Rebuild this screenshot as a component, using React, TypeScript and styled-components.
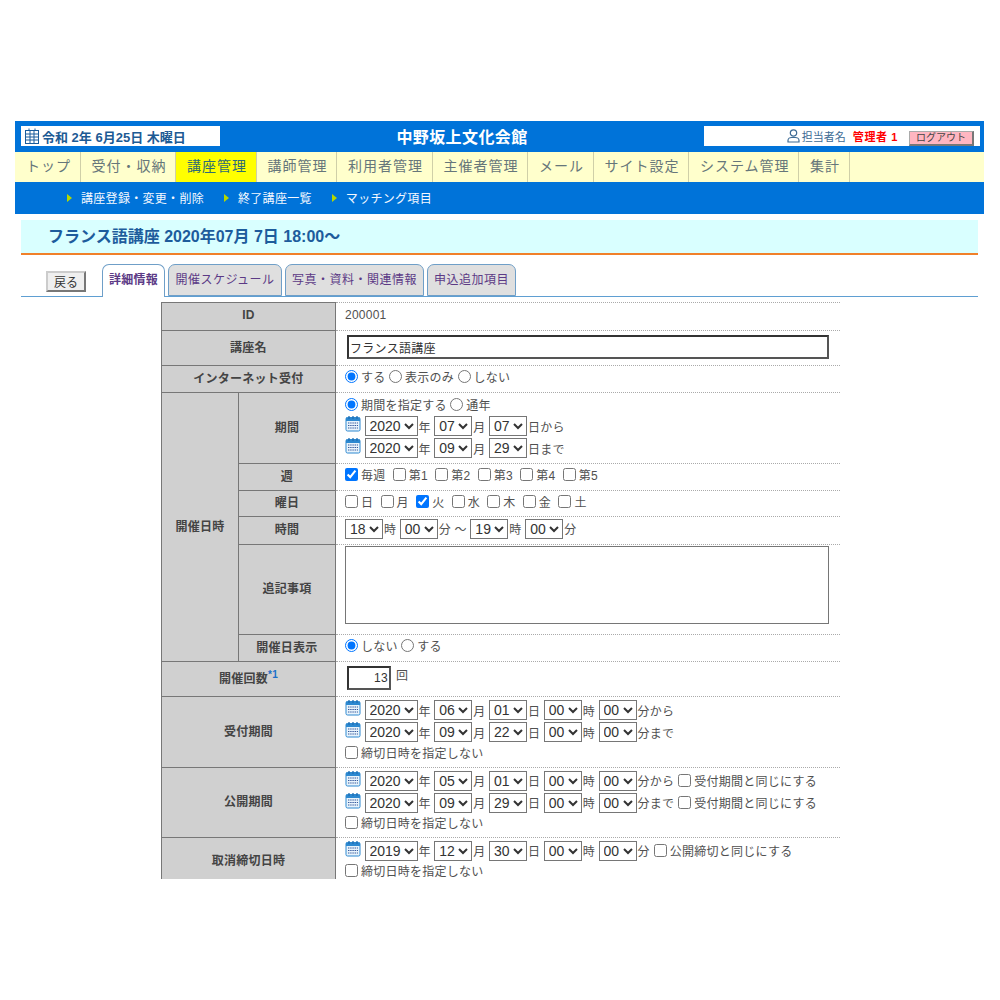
import React from "react";
import styled, { createGlobalStyle } from "styled-components";

const Global = createGlobalStyle`
  html, body { margin: 0; padding: 0; background: #fff; }
  body { font-family: "Liberation Sans", "Noto Sans CJK JP", sans-serif; font-size: 12px; color: #444; }
`;

const Page = styled.div`
  margin: 121px 16px 0 15px;
  height: 758px;
  overflow: hidden;
`;
const Header = styled.header`
  height: 31px;
  background: #0073d9;
  display: flex;
  align-items: flex-start;
  padding: 5px 4px 0 6px;
  box-sizing: border-box;
`;
const DateBox = styled.div`
  width: 199px;
  height: 20px;
  background: #fff;
  display: flex;
  align-items: center;
  gap: 3px;
  padding-left: 4px;
  box-sizing: border-box;
  font-size: 13px;
  font-weight: bold;
  color: #1d5a94;
  white-space: nowrap;
`;
const SiteTitle = styled.h1`
  flex: 1;
  margin: 0;
  text-align: center;
  color: #fff;
  font-size: 16px;
  letter-spacing: .4px;
  line-height: 24px;
  font-weight: bold;
`;
const UserBox = styled.div`
  width: 276px;
  height: 20px;
  background: #fff;
  display: flex;
  align-items: center;
  justify-content: flex-end;
  padding-right: 6px;
  box-sizing: border-box;
`;
const UserLabel = styled.span`
  font-size: 11px;
  color: #3c6a94;
  margin-left: 2px;
  margin-right: 7px;
`;
const UserName = styled.span`
  font-size: 11px;
  font-weight: bold;
  color: #f00;
  margin-right: 11px;
  letter-spacing: .6px;
`;
const Logout = styled.button`
  width: 65px;
  height: 15px;
  margin-top: 4px;
  padding: 0;
  background: #ffb6c1;
  border: 1px solid #777;
  border-right-width: 2px;
  border-bottom-width: 2px;
  border-left-color: #aaa;
  border-top-color: #aaa;
  font: 10px "Liberation Sans", "Noto Sans CJK JP", sans-serif;
  color: #444;
  line-height: 12px;
`;
const Nav = styled.nav`
  height: 30px;
  background: #ffffcc;
  display: flex;
`;
const NavItem = styled.a<{ $active?: boolean }>`
  box-sizing: border-box;
  height: 30px;
  padding: 0 8.5px 0 11px;
  border-right: 1px solid #cfcfa8;
  background: ${p => (p.$active ? "#ffff00" : "transparent")};
  font-size: 14px;
  letter-spacing: 1px;
  line-height: 29px;
  color: ${p => (p.$active ? "#2e6a78" : "#66767a")};
  white-space: nowrap;
`;
const SubNav = styled.div`
  height: 32px;
  background: #0073d9;
  display: flex;
  align-items: center;
  padding: 0 0 1px 52px;
  box-sizing: border-box;
  gap: 20px;
`;
const SubItem = styled.a`
  color: #f4f8ff;
  font-size: 12px;
  letter-spacing: .3px;
  display: flex;
  align-items: center;
  gap: 9px;
`;
const Arrow = styled.i`
  width: 0;
  height: 0;
  border-left: 5px solid #b5d800;
  border-top: 4.5px solid transparent;
  border-bottom: 4.5px solid transparent;
`;
const Content = styled.main`
  padding: 6px 6px 0;
`;
const TitleBand = styled.h2`
  margin: 0;
  height: 35px;
  box-sizing: border-box;
  background: #d9ffff;
  border-bottom: 2px solid #f0802a;
  padding-left: 27px;
  font-size: 16px;
  line-height: 33px;
  font-weight: bold;
  color: #1d5c9c;
`;
const TabBar = styled.div`
  display: flex;
  align-items: flex-end;
  height: 42px;
  box-sizing: border-box;
  padding-left: 25px;
  border-bottom: 1px solid #5f9fd2;
`;
const Back = styled.button`
  width: 40px;
  height: 21px;
  padding: 0;
  margin: 0 16px 4px 0;
  background: #efefef;
  border: 2px solid #777;
  border-top-color: #ccc;
  border-left-color: #ccc;
  font: 12px "Liberation Sans", "Noto Sans CJK JP", sans-serif;
  color: #333;
`;
const Tab = styled.a<{ $active?: boolean; $w: number }>`
  box-sizing: border-box;
  width: ${p => p.$w}px;
  height: ${p => (p.$active ? 33 : 32)}px;
  margin-right: 3px;
  margin-bottom: ${p => (p.$active ? -1 : 0)}px;
  border: 1px solid #6f9fc8;
  border-bottom: ${p => (p.$active ? "none" : "1px solid #6f9fc8")};
  border-radius: 7px 7px 0 0;
  background: ${p => (p.$active ? "#fff" : "#dfdfdf")};
  color: #5c3a86;
  font-size: 12px;
  font-weight: ${p => (p.$active ? "bold" : "normal")};
  letter-spacing: ${p => (p.$active ? ".2px" : ".5px")};
  line-height: 31px;
  text-align: center;
  white-space: nowrap;
`;
const Table = styled.table`
  border-collapse: collapse;
  table-layout: fixed;
  width: 679px;
  margin: 5px 0 0 140px;
`;
const Th = styled.th`
  background: #d0d0d0;
  border: 1px solid #777;
  padding: 0 0 4px;
  font-size: 12px;
  letter-spacing: .25px;
  font-weight: bold;
  color: #444;
  text-align: center;
`;
const Td = styled.td`
  border-top: 1px dotted #aaa;
  border-bottom: 1px dotted #aaa;
  padding: 0 0 4px 9px;
  font-size: 12px;
  letter-spacing: .25px;
  color: #505050;
  vertical-align: middle;
`;
const Row = styled.tr<{ $h: number }>`
  height: ${p => p.$h}px;
`;
const Line = styled.div<{ $short?: boolean }>`
  display: flex;
  align-items: center;
  height: ${p => (p.$short ? 18 : 22)}px;
  white-space: nowrap;
`;
const Option = styled.label`
  display: inline-flex;
  align-items: center;
  margin-right: 3.5px;
`;
const CheckOption = styled(Option)`
  margin-right: 7.3px;
`;
const Radio = styled.input.attrs({ type: "radio", readOnly: true })`
  margin: 0 3px 0 0;
`;
const Check = styled.input.attrs({ type: "checkbox", readOnly: true })`
  margin: 0 3px 0 0;
`;
const InlineCheck = styled(Check)`
  margin-left: 4px;
`;
const Select = styled.select<{ $w: number }>`
  box-sizing: border-box;
  width: ${p => p.$w}px;
  flex: none;
  font-size: 14px;
  font-family: "Liberation Sans", sans-serif;
  height: 20px;
  margin: 0 1px 0 3.5px;
  padding: 0;
  color: #333;
  background: #fff;
`;
const TimeSelect = styled(Select)`
  margin-left: 0;
`;
const NameInput = styled.input`
  box-sizing: border-box;
  width: 482px;
  height: 24px;
  margin: 2px 0 0 2px;
  padding: 0 1px;
  border: 2px solid #333;
  border-right-color: #555;
  border-bottom-color: #555;
  font: 12px "Liberation Sans", "Noto Sans CJK JP", sans-serif;
  letter-spacing: .3px;
  color: #333;
  display: block;
`;
const NumInput = styled(NameInput)`
  width: 44px;
  text-align: right;
  display: inline-block;
  vertical-align: middle;
  margin-right: 5px;
`;
const Note = styled.textarea`
  box-sizing: border-box;
  display: block;
  width: 484px;
  height: 78px;
  margin: 0 0 6px;
  border: 1px solid #767676;
  resize: none;
`;
const Sup = styled.sup`
  color: #1a6fc8;
  font-size: 10px;
  line-height: 0;
`;
const CalSvg = styled.svg`
  flex: none;
  margin-top: -5px;
`;

const Calendar = () => (
  <CalSvg width="16" height="17" viewBox="0 0 16 17">
    <rect x="1" y="2.5" width="14" height="13.5" rx="1.5" fill="#e9f4fc" stroke="#2c88d0" />
    <rect x="1" y="2.5" width="14" height="3.5" fill="#2c88d0" />
    <path d="M4 1v3M8 1v3M12 1v3" stroke="#1e6fb5" strokeWidth="1.3" />
    <path d="M3 8h10M3 10.5h10M3 13h10" stroke="#35589c" strokeWidth="1.2" strokeDasharray="1.4 .8" />
  </CalSvg>
);
const GridIcon = () => (
  <svg width="14" height="16" viewBox="0 0 14 16" fill="none" stroke="#1a5c9c" strokeWidth="1">
    <rect x=".5" y="2.5" width="13" height="13" />
    <path d="M.5 6h13M.5 9h13M.5 12h13M5 2.5v13M9 2.5v13M4 .5v2M10 .5v2" />
  </svg>
);
const PersonIcon = () => (
  <svg width="13" height="14" viewBox="0 0 13 14" fill="none" stroke="#3c6a94" strokeWidth="1.2">
    <circle cx="6.5" cy="4" r="3.2" />
    <path d="M1 13v-1.5C1 9.5 3 8.5 4.5 8.5h4c1.5 0 3.5 1 3.5 3V13z" />
  </svg>
);

const Sel = ({ v, time }: { v: string; time?: boolean }) => {
  const S = time ? TimeSelect : Select;
  return (
    <S $w={v.length > 2 ? 53 : 38} defaultValue={v}>
      <option value={v}>{v}</option>
    </S>
  );
};
const Ymd = ({ y, m, d, dTail }: { y: string; m: string; d: string; dTail?: string }) => (
  <>
    <Calendar />
    <Sel v={y} />年
    <Sel v={m} />月
    <Sel v={d} />{dTail ?? "日"}
  </>
);
const Hm = ({ tail, h = "00", mi = "00" }: { tail: string; h?: string; mi?: string }) => (
  <>
    <Sel v={h} />時
    <Sel v={mi} />{tail}
  </>
);
const R = ({ label, on }: { label: string; on?: boolean }) => (
  <Option>
    <Radio name={label} checked={!!on} onChange={() => {}} />
    {label}
  </Option>
);
const C = ({ label, on }: { label: string; on?: boolean }) => (
  <CheckOption>
    <Check checked={!!on} onChange={() => {}} />
    {label}
  </CheckOption>
);
const NoDeadline = () => (
  <Line $short>
    <C label="締切日時を指定しない" />
  </Line>
);
const SameAs = ({ label }: { label: string }) => (
  <Option>
    <InlineCheck />
    {label}
  </Option>
);

const navs = ["トップ", "受付・収納", "講座管理", "講師管理", "利用者管理", "主催者管理", "メール", "サイト設定", "システム管理", "集計"];

export default function App() {
  return (
    <>
      <Global />
      <Page>
        <Header>
          <DateBox>
            <GridIcon />
            令和 2年 6月25日 木曜日
          </DateBox>
          <SiteTitle>中野坂上文化会館</SiteTitle>
          <UserBox>
            <PersonIcon />
            <UserLabel>担当者名</UserLabel>
            <UserName>管理者 1</UserName>
            <Logout>ログアウト</Logout>
          </UserBox>
        </Header>
        <Nav>
          {navs.map(n => (
            <NavItem key={n} $active={n === "講座管理"}>{n}</NavItem>
          ))}
        </Nav>
        <SubNav>
          <SubItem><Arrow />講座登録・変更・削除</SubItem>
          <SubItem><Arrow />終了講座一覧</SubItem>
          <SubItem><Arrow />マッチング項目</SubItem>
        </SubNav>
        <Content>
          <TitleBand>フランス語講座 2020年07月 7日 18:00〜</TitleBand>
          <TabBar>
            <Back>戻る</Back>
            <Tab $active $w={63}>詳細情報</Tab>
            <Tab $w={114}>開催スケジュール</Tab>
            <Tab $w={139}>写真・資料・関連情報</Tab>
            <Tab $w={89}>申込追加項目</Tab>
          </TabBar>
          <Table>
            <colgroup>
              <col width={77} />
              <col width={97} />
              <col />
            </colgroup>
            <tbody>
              <Row $h={28}>
                <Th colSpan={2}>ID</Th>
                <Td>200001</Td>
              </Row>
              <Row $h={35}>
                <Th colSpan={2}>講座名</Th>
                <Td><NameInput defaultValue="フランス語講座" /></Td>
              </Row>
              <Row $h={27}>
                <Th colSpan={2}>インターネット受付</Th>
                <Td>
                  <R label="する" on />
                  <R label="表示のみ" />
                  <R label="しない" />
                </Td>
              </Row>
              <Row $h={71}>
                <Th rowSpan={6}>開催日時</Th>
                <Th>期間</Th>
                <Td>
                  <Line><R label="期間を指定する" on /><R label="通年" /></Line>
                  <Line><Ymd y="2020" m="07" d="07" dTail="日から" /></Line>
                  <Line><Ymd y="2020" m="09" d="29" dTail="日まで" /></Line>
                </Td>
              </Row>
              <Row $h={27}>
                <Th>週</Th>
                <Td>
                  <C label="毎週" on />
                  <C label="第1" />
                  <C label="第2" />
                  <C label="第3" />
                  <C label="第4" />
                  <C label="第5" />
                </Td>
              </Row>
              <Row $h={26}>
                <Th>曜日</Th>
                <Td>
                  <C label="日" />
                  <C label="月" />
                  <C label="火" on />
                  <C label="水" />
                  <C label="木" />
                  <C label="金" />
                  <C label="土" />
                </Td>
              </Row>
              <Row $h={28}>
                <Th>時間</Th>
                <Td>
                  <Line>
                    <Sel v="18" time />時
                    <Sel v="00" />分 ～
                    <Sel v="19" />時
                    <Sel v="00" />分
                  </Line>
                </Td>
              </Row>
              <Row $h={90}>
                <Th>追記事項</Th>
                <Td><Note /></Td>
              </Row>
              <Row $h={27}>
                <Th>開催日表示</Th>
                <Td>
                  <R label="しない" on />
                  <R label="する" />
                </Td>
              </Row>
              <Row $h={35}>
                <Th colSpan={2}>開催回数<Sup>*1</Sup></Th>
                <Td><NumInput defaultValue="13" />回</Td>
              </Row>
              <Row $h={71}>
                <Th colSpan={2}>受付期間</Th>
                <Td>
                  <Line><Ymd y="2020" m="06" d="01" /><Hm tail="分から" /></Line>
                  <Line><Ymd y="2020" m="09" d="22" /><Hm tail="分まで" /></Line>
                  <NoDeadline />
                </Td>
              </Row>
              <Row $h={70}>
                <Th colSpan={2}>公開期間</Th>
                <Td>
                  <Line><Ymd y="2020" m="05" d="01" /><Hm tail="分から" /><SameAs label="受付期間と同じにする" /></Line>
                  <Line><Ymd y="2020" m="09" d="29" /><Hm tail="分まで" /><SameAs label="受付期間と同じにする" /></Line>
                  <NoDeadline />
                </Td>
              </Row>
              <Row $h={48}>
                <Th colSpan={2}>取消締切日時</Th>
                <Td>
                  <Line><Ymd y="2019" m="12" d="30" /><Hm tail="分" /><SameAs label="公開締切と同じにする" /></Line>
                  <NoDeadline />
                </Td>
              </Row>
            </tbody>
          </Table>
        </Content>
      </Page>
    </>
  );
}
